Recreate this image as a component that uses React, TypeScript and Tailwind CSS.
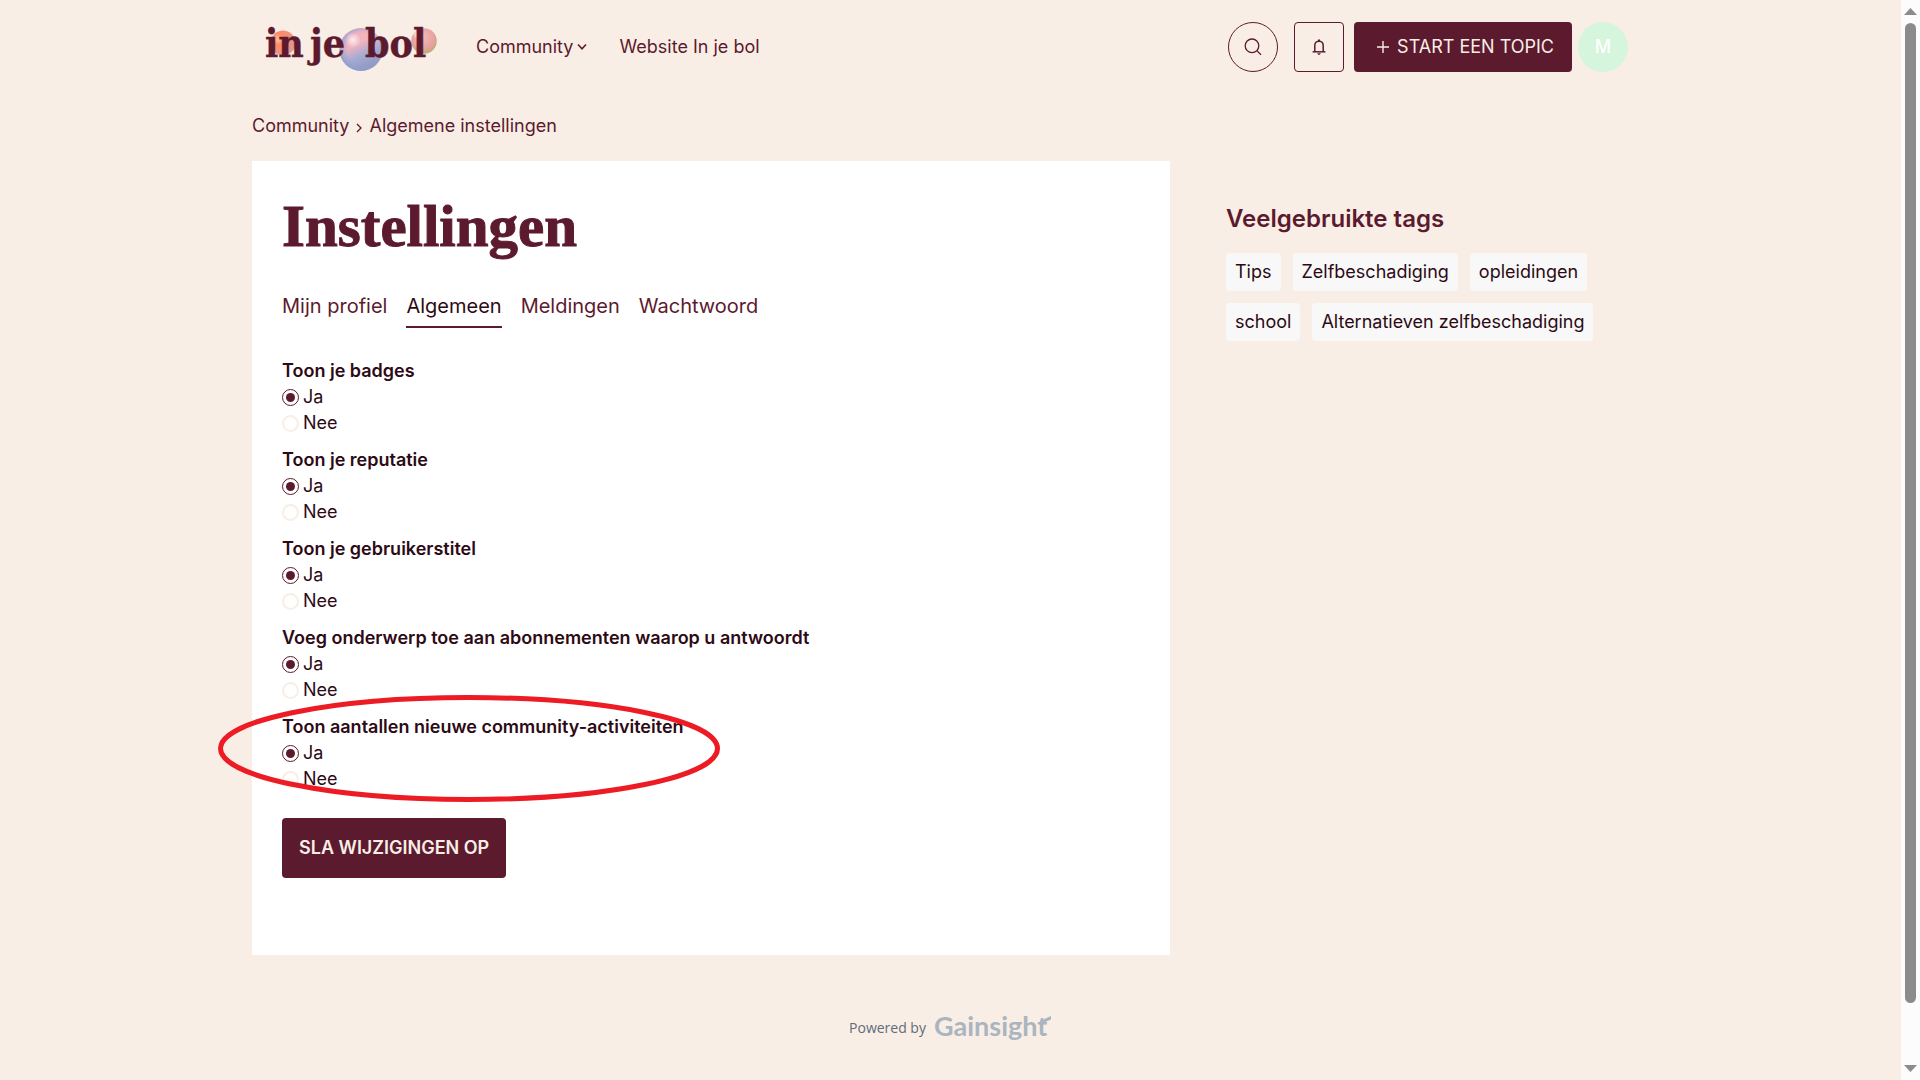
import { useState } from "react";

const tabs = ["Mijn profiel", "Algemeen", "Meldingen", "Wachtwoord"];

const settings = [
  { name: "badges", label: "Toon je badges" },
  { name: "reputation", label: "Toon je reputatie" },
  { name: "title", label: "Toon je gebruikerstitel" },
  {
    name: "subscribe",
    label: "Voeg onderwerp toe aan abonnementen waarop u antwoordt",
  },
  {
    name: "counters",
    label: "Toon aantallen nieuwe community-activiteiten",
    highlighted: true,
  },
];

const tags = [
  "Tips",
  "Zelfbeschadiging",
  "opleidingen",
  "school",
  "Alternatieven zelfbeschadiging",
];

function Logo() {
  return (
    <svg width="176" height="52" viewBox="0 0 176 52" role="img" aria-label="in je bol">
      <defs>
        <radialGradient id="orange" cx="0.3" cy="0.35" r="0.75">
          <stop offset="0" stopColor="#ffc0a0" />
          <stop offset="0.3" stopColor="#ff8a62" />
          <stop offset="0.65" stopColor="#ec9280" />
          <stop offset="1" stopColor="#df9a98" />
        </radialGradient>
        <linearGradient id="blue" x1="0.3" y1="0" x2="0.75" y2="1">
          <stop offset="0" stopColor="#f5b4bd" />
          <stop offset="0.35" stopColor="#f0b3c0" />
          <stop offset="0.6" stopColor="#a8acd3" />
          <stop offset="1" stopColor="#8592bd" />
        </linearGradient>
        <radialGradient id="blueRim" cx="0.55" cy="0.48" r="0.55">
          <stop offset="0.65" stopColor="#98a6d4" stopOpacity="0" />
          <stop offset="1" stopColor="#8c9dcb" stopOpacity="0.85" />
        </radialGradient>
        <radialGradient id="pink" cx="0.45" cy="0.35" r="0.7">
          <stop offset="0" stopColor="#f4b9b0" />
          <stop offset="0.6" stopColor="#e8a3a2" />
          <stop offset="0.85" stopColor="#cda67f" />
          <stop offset="1" stopColor="#aab55c" />
        </radialGradient>
        <radialGradient id="shine">
          <stop offset="0" stopColor="#fff" stopOpacity="0.75" />
          <stop offset="1" stopColor="#fff" stopOpacity="0" />
        </radialGradient>
      </defs>
      <circle cx="19" cy="22" r="12.5" fill="url(#orange)" />
      <circle cx="97" cy="28.5" r="21.5" fill="url(#blue)" />
      <circle cx="97" cy="28.5" r="21.5" fill="url(#blueRim)" />
      <circle cx="89" cy="19" r="8" fill="url(#shine)" />
      <circle cx="160" cy="20" r="12.8" fill="url(#pink)" />
      <circle cx="153" cy="13" r="5" fill="url(#shine)" />
      <g
        fill="#5c1a2e"
        stroke="#5c1a2e"
        strokeWidth="0.4"
        strokeLinejoin="round"
        fontFamily="'DejaVu Serif Condensed', 'DejaVu Serif', serif"
        fontWeight="700"
        fontSize="39"
      >
        <text x="1" y="36">in</text>
        <text x="46" y="36">je</text>
        <text x="101" y="36">bol</text>
      </g>
    </svg>
  );
}

function Header() {
  return (
    <header className="flex h-[94px] items-center pr-[21px] pl-3">
      <a href="#home">
        <Logo />
      </a>
      <nav className="ml-9 flex items-center gap-8">
        <button className="flex items-center gap-1">
          Community
          <svg width="10" height="8" viewBox="0 0 10 8" fill="none" stroke="currentColor" strokeWidth="1.6">
            <path d="M1 1.5 5 5.8 9 1.5" />
          </svg>
        </button>
        <a href="#website">Website In je bol</a>
      </nav>
      <div className="ml-auto flex items-center">
        <button
          aria-label="Zoeken"
          className="flex size-[50px] items-center justify-center rounded-full border border-[#5c1a2e]"
        >
          <svg width="18" height="18" viewBox="0 0 18 18" fill="none" stroke="currentColor" strokeWidth="1.3">
            <circle cx="8" cy="7.8" r="6.8" />
            <path d="m12.8 12.6 4.2 4.2" />
          </svg>
        </button>
        <button
          aria-label="Meldingen"
          className="ml-4 flex size-[50px] items-center justify-center rounded border border-[#5c1a2e]"
        >
          <svg width="14" height="16" viewBox="0 0 14 16" fill="none" stroke="currentColor" strokeWidth="1.5">
            <path d="M2.8 12.3V6.4C2.8 4 4.6 2.2 7 2.2s4.2 1.8 4.2 4.2v5.9" />
            <path d="M.6 12.8h12.8" />
            <path d="M7 .4v2" strokeWidth="2" />
            <path d="M5.2 14.3h3.6L7.8 15.8H6.2Z" fill="currentColor" stroke="none" />
          </svg>
        </button>
        <button className="ml-2.5 flex h-[50px] items-center gap-2 rounded bg-[#5c1a2e] pr-[18px] pl-[23px] text-[#f9eee5]">
          <svg width="12" height="12" viewBox="0 0 12 12" fill="none" stroke="currentColor" strokeWidth="1.4">
            <path d="M6 0v12M0 6h12" />
          </svg>
          START EEN TOPIC
        </button>
        <a
          href="#profile"
          className="ml-1.5 flex size-[50px] items-center justify-center rounded-full bg-[#d5f5dc] font-medium text-white"
        >
          M
        </a>
      </div>
    </header>
  );
}

type SettingProps = { name: string; label: string; highlighted?: boolean };

function Setting({ name, label, highlighted }: SettingProps) {
  const [value, setValue] = useState("Ja");

  return (
    <div className="relative">
      <fieldset>
        <legend className="leading-[26px] font-semibold">{label}</legend>
        {["Ja", "Nee"].map((option) => (
          <label key={option} className="flex items-center gap-1 leading-[26px]">
            <input
              type="radio"
              name={name}
              checked={value === option}
              onChange={() => setValue(option)}
              className="flex size-[17px] appearance-none items-center justify-center rounded-full border-2 border-[#f9eee5] before:size-[9px] before:rounded-full checked:border checked:border-[#5c1a2e] checked:before:bg-[#5c1a2e]"
            />
            {option}
          </label>
        ))}
      </fieldset>
      {highlighted && (
        <svg
          className="pointer-events-none absolute -top-[19px] -left-16"
          width="502"
          height="107"
          viewBox="0 0 502 107"
          fill="none"
        >
          <ellipse cx="251" cy="53.5" rx="248.5" ry="51" stroke="#ed1c24" strokeWidth="5" />
        </svg>
      )}
    </div>
  );
}

function Scrollbar() {
  return (
    <div className="sticky top-0 flex h-screen w-[19px] flex-none flex-col items-center bg-[#fcfcfc] py-2 text-[#8b8b8b]">
      <svg width="13" height="7" viewBox="0 0 13 7" fill="currentColor">
        <path d="M6.5 0 13 7H0Z" />
      </svg>
      <div className="mt-2 mb-[62px] w-[11px] flex-1 rounded-full bg-[#8b8b8b]" />
      <svg width="13" height="7" viewBox="0 0 13 7" fill="currentColor">
        <path d="M0 0h13L6.5 7Z" />
      </svg>
    </div>
  );
}

export default function App() {
  return (
    <div className="flex min-h-screen bg-[#f9eee5] font-['Inter',sans-serif] text-lg text-[#5c1a2e]">
      <div className="min-w-0 flex-1">
        <div className="mx-auto max-w-[1397px]">
          <Header />
          <nav className="flex h-16 items-center gap-1.5">
            <a href="#community">Community</a>
            <svg className="mt-1" width="8" height="10" viewBox="0 0 8 10" fill="none" stroke="currentColor" strokeWidth="1.3">
              <path d="m2 1 4 4-4 4" />
            </svg>
            <a href="#settings">Algemene instellingen</a>
          </nav>

          <div className="mt-[3px] flex items-start gap-14">
            <main className="min-w-0 flex-1 bg-white px-[30px] pt-[33px] pb-[77px]">
              <h1 className="font-['Liberation_Serif',serif] text-[59px] leading-[64px] font-bold [-webkit-text-stroke:1px_#5c1a2e]">
                Instellingen
              </h1>
              <nav className="mt-[34px] flex gap-[19px] text-xl leading-7">
                {tabs.map((tab) => (
                  <a
                    key={tab}
                    href="#tab"
                    className={
                      tab === "Algemeen"
                        ? "border-b-2 border-[#5c1a2e] pb-1.5 text-[#2d0a15]"
                        : "border-b-2 border-transparent pb-1.5"
                    }
                  >
                    {tab}
                  </a>
                ))}
              </nav>
              <form className="mt-[30px] text-[#2d0a15]" onSubmit={(e) => e.preventDefault()}>
                <div className="flex flex-col gap-[11px]">
                  {settings.map((setting) => (
                    <Setting key={setting.name} {...setting} />
                  ))}
                </div>
                <button className="mt-[26px] h-[60px] rounded bg-[#5c1a2e] px-[17px] font-semibold text-[#f9eee5]">
                  SLA WIJZIGINGEN OP
                </button>
              </form>
            </main>

            <aside className="w-[423px] pt-10">
              <h2 className="text-2xl leading-9 font-semibold">Veelgebruikte tags</h2>
              <div className="mt-4 flex flex-wrap gap-3 text-[#2d0a15]">
                {tags.map((tag) => (
                  <a key={tag} href="#tag" className="rounded bg-[#f8f8f8] px-[9px] leading-[38px]">
                    {tag}
                  </a>
                ))}
              </div>
            </aside>
          </div>
        </div>

        <footer className="mt-[53px] flex items-center justify-center gap-2 font-['Open_Sans',sans-serif] text-sm text-[#5f6b7a]">
          <span>Powered by</span>
          <svg width="118" height="40" viewBox="0 0 118 40" role="img" aria-label="Gainsight">
            <text
              x="0"
              y="28"
              fill="#abb5c0"
              fontFamily="Lato, sans-serif"
              fontWeight="700"
              fontSize="27"
            >
              Gainsight
            </text>
            <path d="M106 13 117 8v3.6l-8 3.4Z" fill="#abb5c0" />
          </svg>
        </footer>
      </div>
      <Scrollbar />
    </div>
  );
}
